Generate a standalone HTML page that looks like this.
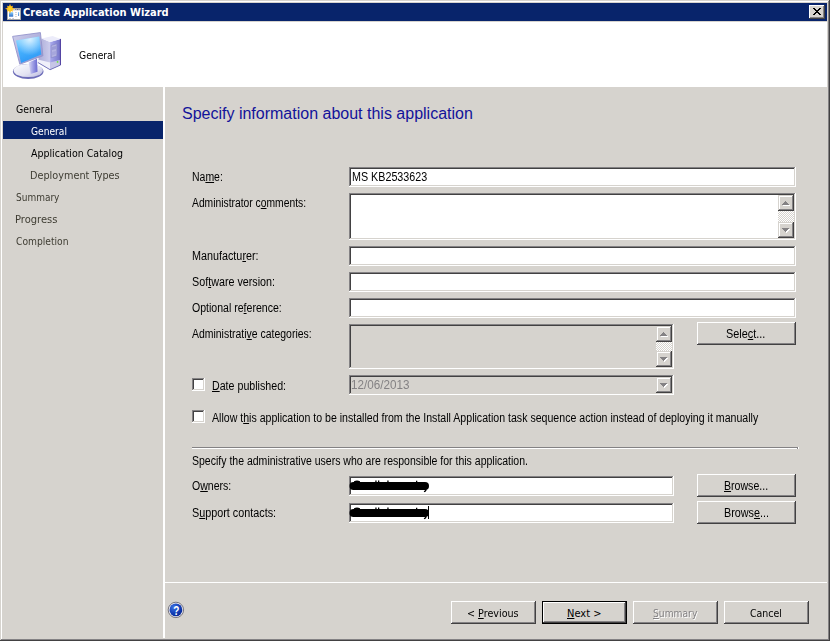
<!DOCTYPE html>
<html lang="en">
<head>
<meta charset="utf-8">
<title>Create Application Wizard</title>
<style>
html,body{margin:0;padding:0;background:#d6d3ce;}
body{width:830px;height:641px;overflow:hidden;position:relative;
  font-family:"Liberation Sans",sans-serif;font-size:11px;color:#000;}
#win{position:absolute;left:0;top:0;width:830px;height:641px;background:#d6d3ce;overflow:hidden;}
.abs{position:absolute;}
/* window frame */
.fr{position:absolute;}
/* text helpers */
.t{position:absolute;white-space:nowrap;line-height:13px;height:13px;font-size:11px;transform-origin:0 0;}
.ms{font-family:"Liberation Sans",sans-serif;font-size:12.5px;line-height:15px;height:15px;}
.th{font-family:"DejaVu Sans Condensed","Liberation Sans",sans-serif;}
u{text-decoration:underline;text-underline-offset:1px;text-decoration-thickness:1px;}
/* sunken edit */
.edit{position:absolute;box-sizing:border-box;background:#fff;
  box-shadow:inset -1px -1px 0 #fff, inset 1px 1px 0 #848284, inset -2px -2px 0 #d6d3ce, inset 2px 2px 0 #424142;}
.edit.dis{background:#d6d3ce;}
/* raised button */
.btn{position:absolute;box-sizing:border-box;background:#d6d3ce;
  box-shadow:inset -1px -1px 0 #424142, inset 1px 1px 0 #fff, inset -2px -2px 0 #848284, inset 2px 2px 0 #d6d3ce;}
.btn.def{border:1px solid #000;}
/* scrollbar pieces */
.sb{position:absolute;box-sizing:border-box;width:16px;height:16px;background:#d6d3ce;
  box-shadow:inset -1px -1px 0 #424142, inset 1px 1px 0 #d6d3ce, inset -2px -2px 0 #848284, inset 2px 2px 0 #fff;}
.trk{position:absolute;width:16px;background:repeating-conic-gradient(#fff 0% 25%,#d6d3ce 0% 50%) 0 0/2px 2px;}
.sb svg{position:absolute;left:1px;top:1px;}
.cb{position:absolute;box-sizing:border-box;width:13px;height:13px;background:#fff;
  box-shadow:inset -1px -1px 0 #fff, inset 1px 1px 0 #848284, inset -2px -2px 0 #d6d3ce, inset 2px 2px 0 #424142;}
.nav{color:#000;}
.navd{color:#3e3c32;}
</style>
</head>
<body>
<div id="win">
  <!-- outer 3D window frame -->
  <div class="fr" style="left:1px;top:1px;width:827px;height:1px;background:#fff"></div>
  <div class="fr" style="left:1px;top:1px;width:1px;height:638px;background:#fff"></div>
  <div class="fr" style="left:828px;top:1px;width:1px;height:639px;background:#848284"></div>
  <div class="fr" style="left:1px;top:639px;width:828px;height:1px;background:#848284"></div>
  <div class="fr" style="left:829px;top:0;width:1px;height:641px;background:#424142"></div>
  <div class="fr" style="left:0;top:640px;width:830px;height:1px;background:#424142"></div>

  <!-- title bar -->
  <div id="titlebar" class="abs" style="left:3px;top:3px;width:824px;height:18px;background:#08246b;"></div>
  <svg id="ticon" class="abs" style="left:4px;top:3px" width="18" height="18" viewBox="4 3 18 18">
    <defs>
      <linearGradient id="gtb" x1="0" y1="0" x2="0" y2="1"><stop offset="0" stop-color="#8cd0ff"/><stop offset="1" stop-color="#2f6cc4"/></linearGradient>
      <radialGradient id="gsun" cx="0.5" cy="0.5" r="0.5"><stop offset="0" stop-color="#ffd81e"/><stop offset="0.55" stop-color="#ffc01a"/><stop offset="1" stop-color="#ff9c14"/></radialGradient>
    </defs>
    <rect x="7.5" y="8.5" width="13" height="11" fill="#fff" stroke="#a6a6a6"/>
    <rect x="8" y="9" width="12" height="1.6" fill="#d2d2da"/>
    <rect x="15.4" y="9" width="0.9" height="0.9" fill="#50507c"/><rect x="17" y="9" width="0.9" height="0.9" fill="#50507c"/><rect x="18.6" y="9" width="0.9" height="0.9" fill="#50507c"/>
    <rect x="9" y="12.2" width="4.2" height="4.5" fill="url(#gtb)"/>
    <rect x="15.1" y="12.2" width="1.7" height="0.8" fill="#c4c4cc"/><rect x="15.1" y="14.2" width="1.7" height="0.8" fill="#c4c4cc"/><rect x="15.1" y="16.2" width="1.7" height="0.8" fill="#c4c4cc"/>
    <rect x="18.1" y="12" width="1" height="3.8" fill="url(#gtb)"/>
    <rect x="9.2" y="18.1" width="1.6" height="0.8" fill="#b0b0c8"/><rect x="12.3" y="18.1" width="1.6" height="0.8" fill="#b0b0c8"/>
    <polygon points="10.00,3.70 10.99,6.30 12.97,5.73 12.40,7.71 15.00,8.70 12.40,9.69 12.97,11.67 10.99,11.10 10.00,13.70 9.01,11.10 7.03,11.67 7.60,9.69 5.00,8.70 7.60,7.71 7.03,5.73 9.01,6.30" fill="url(#gsun)"/>
  </svg>
  <div id="t_title" class="t th" style="left:23px;top:6px;color:#fff;font-weight:bold;">Create Application Wizard</div>
  <div id="closebtn" class="btn" style="left:809px;top:5px;width:16px;height:14px;">
    <svg class="abs" style="left:1px;top:1px" width="14" height="12" viewBox="0 0 14 12"><path d="M3 2h2v1h1v1h2v-1h1v-1h2v1h-1v1h-1v1h-1v1h1v1h1v1h1v1h-2v-1h-1v-1h-2v1h-1v1h-2v-1h1v-1h1v-1h1v-1h-1v-1h-1v-1h-1z" fill="#000"/></svg>
  </div>
  <div class="abs" style="left:3px;top:21px;width:824px;height:1px;background:#d6d3ce"></div>

  <!-- header -->
  <div id="header" class="abs" style="left:3px;top:22px;width:824px;height:65px;background:#fff;"></div>
<svg id="pcicon" class="abs" style="left:10px;top:29px" width="54" height="52" viewBox="10 29 54 52">
    <defs>
      <linearGradient id="gscr" x1="0" y1="0" x2="0.35" y2="1"><stop offset="0" stop-color="#8ad8ff"/><stop offset="0.45" stop-color="#4cb6ff"/><stop offset="1" stop-color="#2f9af6"/></linearGradient>
      <radialGradient id="gscrh" cx="0.55" cy="0.12" r="0.6"><stop offset="0" stop-color="#fff" stop-opacity="0.75"/><stop offset="1" stop-color="#fff" stop-opacity="0"/></radialGradient>
      <linearGradient id="gfr" x1="0" y1="0" x2="1" y2="1"><stop offset="0" stop-color="#d0d0ec"/><stop offset="1" stop-color="#9090cc"/></linearGradient>
      <linearGradient id="gbase" x1="0" y1="0" x2="1" y2="1"><stop offset="0" stop-color="#ffffff"/><stop offset="0.6" stop-color="#e2e2f2"/><stop offset="1" stop-color="#b4b4dc"/></linearGradient>
      <linearGradient id="gneck" x1="0" y1="0" x2="1" y2="0"><stop offset="0" stop-color="#dcdcf4"/><stop offset="0.4" stop-color="#a8a8e8"/><stop offset="1" stop-color="#6868d0"/></linearGradient>
      <linearGradient id="gfront" x1="0" y1="0" x2="1" y2="0"><stop offset="0" stop-color="#aaaaec"/><stop offset="1" stop-color="#7272c8"/></linearGradient>
      <linearGradient id="gside" x1="0" y1="0" x2="1" y2="0"><stop offset="0" stop-color="#aaaad6"/><stop offset="1" stop-color="#ccccec"/></linearGradient>
      <filter id="soft" x="-5%" y="-5%" width="110%" height="110%"><feGaussianBlur stdDeviation="0.35"/></filter>
    </defs>
    <g filter="url(#soft)">
      <!-- tower -->
      <polygon points="41.7,38.5 50.1,41.9 50.1,69.7 37.9,62.5" fill="url(#gside)"/>
      <polygon points="50.1,41.9 60.6,38.9 60.6,65 50.1,69.7" fill="url(#gfront)"/>
      <polygon points="41.7,38.5 52.6,36 60.6,38.9 50.1,41.9" fill="#ececfa"/>
      <polygon points="37.9,59.4 50.1,62.6 50.1,69.7 37.9,62.5" fill="#f0f0fa"/>
      <polygon points="50.1,62.6 60.6,59.8 60.6,65 50.1,69.7" fill="#c6c6e6"/>
      <polyline points="37.9,62.5 50.1,69.7 60.6,65" fill="none" stroke="#6a6ab4" stroke-width="0.9"/><polyline points="60.4,65 60.4,38.9" fill="none" stroke="#4a3a9c" stroke-width="1"/>
      <polygon points="51.2,45.4 56.8,43.8 56.8,56 51.2,57.8" fill="#b4b4e2" stroke="#8484c4" stroke-width="0.6"/>
      <polygon points="51.8,47 56.2,45.7 56.2,49 51.8,50.3" fill="#9c9cd6"/>
      <polygon points="51.8,52 56.2,50.7 56.2,54.3 51.8,55.6" fill="#a6a6dc"/>
      <rect x="56.8" y="61" width="1.5" height="1.8" fill="#6fe04a"/>
      <!-- base -->
      <ellipse cx="28.2" cy="71.5" rx="15.3" ry="7.4" fill="#6c6cb8"/>
      <ellipse cx="28.2" cy="70.5" rx="14.6" ry="6.6" fill="url(#gbase)"/>
      <!-- neck -->
      <polygon points="28.6,62.5 37,58.8 37.5,71.8 30.7,73.9" fill="url(#gneck)"/>
      <!-- monitor -->
      <polygon points="12.6,36.4 40.4,32.6 42.9,55.8 19.8,64.2" fill="url(#gfr)" stroke="#9494cc" stroke-width="0.9" stroke-linejoin="round"/>
      <polygon points="16,40.6 39.2,36.4 41.3,54.5 21.05,62.9" fill="url(#gscr)"/>
      <polygon points="16,40.6 39.2,36.4 41.3,54.5 21.05,62.9" fill="url(#gscrh)"/>
    </g>
  </svg>
  <div id="t_hgeneral" class="t th" style="left:79px;top:49px;transform:scaleX(0.931);">General</div>

  <!-- sidebar -->
  <div id="vdiv" class="abs" style="left:163px;top:87px;width:2px;height:551px;background:#fff"></div>
  <div id="navsel" class="abs" style="left:3px;top:121px;width:160px;height:18px;background:#08246b"></div>
  <div id="t_nav1" class="t th nav" style="left:16px;top:103px;transform:scaleX(0.946);">General</div>
  <div id="t_nav2" class="t th" style="left:31px;top:125px;color:#fff;transform:scaleX(0.923);">General</div>
  <div id="t_nav3" class="t th nav" style="left:31px;top:147px;transform:scaleX(0.954);">Application Catalog</div>
  <div id="t_nav4" class="t th navd" style="left:30px;top:169px;transform:scaleX(0.980);">Deployment Types</div>
  <div id="t_nav5" class="t th navd" style="left:16px;top:191px;transform:scaleX(0.908);">Summary</div>
  <div id="t_nav6" class="t th navd" style="left:15px;top:213px;transform:scaleX(1.005);">Progress</div>
  <div id="t_nav7" class="t th navd" style="left:16px;top:235px;transform:scaleX(0.927);">Completion</div>

  <!-- content -->
  <div id="t_heading" class="t ms" style="left:182px;top:104px;font-size:16px;line-height:20px;height:20px;color:#12129a;">Specify information about this application</div>

  <div id="t_name" class="t ms" style="left:192px;top:170px;transform:scaleX(0.837);">Na<u>m</u>e:</div>
  <div id="e_name" class="edit" style="left:349px;top:167px;width:447px;height:20px;"></div>
  <div id="t_nameval" class="t ms" style="left:352px;top:170px;transform:scaleX(0.859);">MS KB2533623</div>

  <div id="t_comments" class="t ms" style="left:192px;top:196px;transform:scaleX(0.825);">Administrator c<u>o</u>mments:</div>
  <div id="e_comments" class="edit" style="left:349px;top:193px;width:447px;height:47px;"></div>
  <div class="sb" style="left:778px;top:195px;"><svg width="14" height="14" viewBox="0 0 14 14" shape-rendering="crispEdges"><path d="M6 5h1v1h1v1h1v1h1v1h-7v-1h1v-1h1v-1h1z" fill="#fff" transform="translate(1,1)"/><path d="M6 5h1v1h1v1h1v1h1v1h-7v-1h1v-1h1v-1h1z" fill="#848284"/></svg></div>
  <div class="trk" style="left:778px;top:211px;height:11px;"></div>
  <div class="sb" style="left:778px;top:222px;"><svg width="14" height="14" viewBox="0 0 14 14" shape-rendering="crispEdges"><path d="M3 5h7v1h-1v1h-1v1h-1v1h-1v-1h-1v-1h-1v-1h-1z" fill="#fff" transform="translate(1,1)"/><path d="M3 5h7v1h-1v1h-1v1h-1v1h-1v-1h-1v-1h-1v-1h-1z" fill="#848284"/></svg></div>

  <div id="t_manu" class="t ms" style="left:192px;top:249px;transform:scaleX(0.863);">Manufactu<u>r</u>er:</div>
  <div id="e_manu" class="edit" style="left:349px;top:246px;width:447px;height:20px;"></div>
  <div id="t_ver" class="t ms" style="left:192px;top:275px;transform:scaleX(0.860);">Sof<u>t</u>ware version:</div>
  <div id="e_ver" class="edit" style="left:349px;top:272px;width:447px;height:20px;"></div>
  <div id="t_ref" class="t ms" style="left:192px;top:301px;transform:scaleX(0.844);">Optional re<u>f</u>erence:</div>
  <div id="e_ref" class="edit" style="left:349px;top:298px;width:447px;height:20px;"></div>

  <div id="t_cat" class="t ms" style="left:192px;top:327px;transform:scaleX(0.836);">Administrati<u>v</u>e categories:</div>
  <div id="e_cat" class="edit dis" style="left:349px;top:324px;width:325px;height:45px;"></div>
  <div class="sb" style="left:656px;top:326px;"><svg width="14" height="14" viewBox="0 0 14 14" shape-rendering="crispEdges"><path d="M6 5h1v1h1v1h1v1h1v1h-7v-1h1v-1h1v-1h1z" fill="#fff" transform="translate(1,1)"/><path d="M6 5h1v1h1v1h1v1h1v1h-7v-1h1v-1h1v-1h1z" fill="#848284"/></svg></div>
  <div class="trk" style="left:656px;top:342px;height:9px;"></div>
  <div class="sb" style="left:656px;top:351px;"><svg width="14" height="14" viewBox="0 0 14 14" shape-rendering="crispEdges"><path d="M3 5h7v1h-1v1h-1v1h-1v1h-1v-1h-1v-1h-1v-1h-1z" fill="#fff" transform="translate(1,1)"/><path d="M3 5h7v1h-1v1h-1v1h-1v1h-1v-1h-1v-1h-1v-1h-1z" fill="#848284"/></svg></div>
  <div id="b_select" class="btn" style="left:697px;top:322px;width:99px;height:23px;"></div>
  <div id="t_select" class="t ms" style="left:726px;top:327px;transform:scaleX(0.871);">Sele<u>c</u>t...</div>

  <div class="cb" style="left:192px;top:378px;"></div>
  <div id="t_date" class="t ms" style="left:212px;top:379px;transform:scaleX(0.852);"><u>D</u>ate published:</div>
  <div id="e_date" class="edit dis" style="left:349px;top:375px;width:325px;height:20px;"></div>
  <div id="t_dateval" class="t ms" style="left:351px;top:378px;color:#848284;transform:scaleX(0.936);">12/06/2013</div>
  <div class="sb" style="left:656px;top:377px;"><svg width="14" height="14" viewBox="0 0 14 14" shape-rendering="crispEdges"><path d="M3 5h7v1h-1v1h-1v1h-1v1h-1v-1h-1v-1h-1v-1h-1z" fill="#fff" transform="translate(1,1)"/><path d="M3 5h7v1h-1v1h-1v1h-1v1h-1v-1h-1v-1h-1v-1h-1z" fill="#848284"/></svg></div>

  <div class="cb" style="left:192px;top:410px;"></div>
  <div id="t_allow" class="t ms" style="left:212px;top:411px;transform:scaleX(0.847);">Allow t<u>h</u>is application to be installed from the Install Application task sequence action instead of deploying it manually</div>

  <div class="abs" style="left:192px;top:447px;width:606px;height:1px;background:#848284"></div>
  <div class="abs" style="left:798px;top:447px;width:1px;height:2px;background:#fff"></div>
  <div class="abs" style="left:192px;top:448px;width:605px;height:1px;background:#fff"></div>
  <div class="abs" style="left:797px;top:448px;width:1px;height:1px;background:#848284"></div>
  <div id="t_spec" class="t ms" style="left:192px;top:454px;transform:scaleX(0.841);">Specify the administrative users who are responsible for this application.</div>

  <div id="t_owners" class="t ms" style="left:192px;top:479px;transform:scaleX(0.843);">O<u>w</u>ners:</div>
  <div id="e_owners" class="edit" style="left:349px;top:476px;width:325px;height:20px;"></div>
  <svg id="scr1" class="abs" style="left:347px;top:476px" width="86" height="20" viewBox="347 476 86 20">
    <path d="M353.5 486 H425" stroke="#000" stroke-width="8" stroke-linecap="round" fill="none"/>
    <path d="M354 481.2 q3 -1.2 6 0 v3 h-6z M375.3 480.6 h1.3 v3 h-1.3z M378 480.6 h1.3 v3 h-1.3z M387.3 480.6 h1.3 v3 h-1.3z M416 480.8 h1.3 v3 h-1.3z M424.3 488 h2.2 v2.6 q-0.6 1.6 -2.6 1.6 v-1 q1 -0.2 1 -1.2z" fill="#000"/>
  </svg>
  <div id="b_browse1" class="btn" style="left:697px;top:474px;width:99px;height:23px;"></div>
  <div id="t_browse1" class="t ms" style="left:724px;top:479px;transform:scaleX(0.846);"><u>B</u>rowse...</div>

  <div id="t_support" class="t ms" style="left:192px;top:506px;transform:scaleX(0.864);">S<u>u</u>pport contacts:</div>
  <div id="e_support" class="edit" style="left:349px;top:503px;width:325px;height:20px;"></div>
  <svg id="scr2" class="abs" style="left:347px;top:503px" width="86" height="20" viewBox="347 476 86 20">
    <path d="M353.5 486 H425" stroke="#000" stroke-width="8" stroke-linecap="round" fill="none"/>
    <path d="M354 481.2 q3 -1.2 6 0 v3 h-6z M375.3 480.6 h1.3 v3 h-1.3z M378 480.6 h1.3 v3 h-1.3z M387.3 480.6 h1.3 v3 h-1.3z M416 480.8 h1.3 v3 h-1.3z M424.3 488 h2.2 v2.6 q-0.6 1.6 -2.6 1.6 v-1 q1 -0.2 1 -1.2z" fill="#000"/>
    <rect x="428" y="479" width="1" height="13" fill="#000"/>
  </svg>
  <div id="b_browse2" class="btn" style="left:697px;top:501px;width:99px;height:23px;"></div>
  <div id="t_browse2" class="t ms" style="left:724px;top:506px;transform:scaleX(0.864);">Brows<u>e</u>...</div>

  <!-- footer -->
  <svg id="helpicon" class="abs" style="left:166px;top:600px" width="20" height="20" viewBox="166 600 20 20">
    <defs><radialGradient id="ghelp" cx="0.35" cy="0.3" r="0.8"><stop offset="0" stop-color="#3f74e4"/><stop offset="0.55" stop-color="#1440b8"/><stop offset="1" stop-color="#06248c"/></radialGradient></defs>
    <circle cx="175.9" cy="609.9" r="7.7" fill="#eceaf0" stroke="#5c5c68" stroke-width="0.8"/>
    <circle cx="175.9" cy="609.9" r="6.4" fill="url(#ghelp)"/>
    <text transform="translate(176.4,615) scale(0.76,1)" x="0" y="0" text-anchor="middle" font-family="Liberation Sans, sans-serif" font-size="13.2" font-weight="bold" fill="#fff">?</text>
  </svg>
  <div class="abs" style="left:165px;top:582px;width:662px;height:1px;background:#fff"></div>
  <div id="b_prev" class="btn" style="left:451px;top:601px;width:85px;height:23px;"></div>
  <div id="t_prev" class="t th" style="left:467px;top:607px;transform:scaleX(0.970);">&lt; <u>P</u>revious</div>
  <div id="b_next" class="btn def" style="left:542px;top:601px;width:85px;height:23px;"></div>
  <div id="t_next" class="t th" style="left:567px;top:607px;"><u>N</u>ext &gt;</div>
  <div id="b_summary" class="btn" style="left:633px;top:601px;width:85px;height:23px;"></div>
  <div id="t_summary" class="t th" style="left:653px;top:607px;color:#848284;text-shadow:1px 1px 0 #fff;transform:scaleX(0.926);"><u>S</u>ummary</div>
  <div id="b_cancel" class="btn" style="left:724px;top:601px;width:85px;height:23px;"></div>
  <div id="t_cancel" class="t th" style="left:750px;top:607px;transform:scaleX(0.952);">Cancel</div>
</div>
</body>
</html>
